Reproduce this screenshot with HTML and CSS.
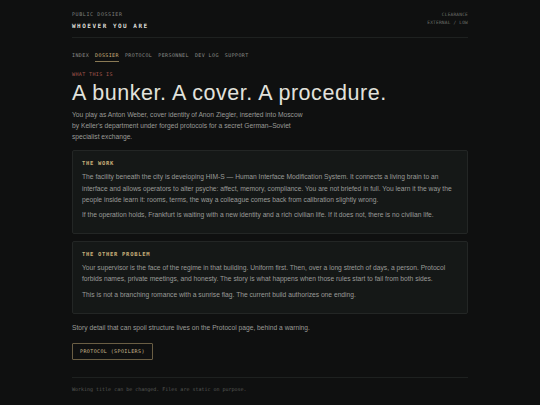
FILE: index.html
```html
<!DOCTYPE html>
<html lang="en">
<head>
    <meta charset="UTF-8">
    <meta name="viewport" content="width=device-width, initial-scale=1.0">
    <title>Dossier</title>
    <link rel="stylesheet" href="styles.css">
</head>
<body>
    <div class="container">
        <header class="top">
            <div>
                <div class="kicker">PUBLIC DOSSIER</div>
                <div class="site-title">WHOEVER YOU ARE</div>
            </div>
            <div class="clearance">
                <div>CLEARANCE</div>
                <div>EXTERNAL / LOW</div>
            </div>
        </header>

        <nav class="nav">
            <a href="#">INDEX</a>
            <a href="#" class="active">DOSSIER</a>
            <a href="#">PROTOCOL</a>
            <a href="#">PERSONNEL</a>
            <a href="#">DEV LOG</a>
            <a href="#">SUPPORT</a>
        </nav>

        <div class="eyebrow">WHAT THIS IS</div>
        <h1>A bunker. A cover. A procedure.</h1>
        <p class="lead">You play as Anton Weber, cover identity of Anon Ziegler, inserted into Moscow by Keller's department under forged protocols for a secret German–Soviet specialist exchange.</p>

        <section class="card">
            <h3>THE WORK</h3>
            <p>The facility beneath the city is developing HIM-S — Human Interface Modification System. It connects a living brain to an interface and allows operators to alter psyche: affect, memory, compliance. You are not briefed in full. You learn it the way the people inside learn it: rooms, terms, the way a colleague comes back from calibration slightly wrong.</p>
            <p>If the operation holds, Frankfurt is waiting with a new identity and a rich civilian life. If it does not, there is no civilian life.</p>
        </section>

        <section class="card">
            <h3>THE OTHER PROBLEM</h3>
            <p>Your supervisor is the face of the regime in that building. Uniform first. Then, over a long stretch of days, a person. Protocol forbids names, private meetings, and honesty. The story is what happens when those rules start to fail from both sides.</p>
            <p>This is not a branching romance with a sunrise flag. The current build authorizes one ending.</p>
        </section>

        <p class="note">Story detail that can spoil structure lives on the Protocol page, behind a warning.</p>

        <a href="#" class="btn">PROTOCOL (SPOILERS)</a>

        <footer class="footer">Working title can be changed. Files are static on purpose.</footer>
    </div>
</body>
</html>
```

FILE: styles.css
```css
body, html {
    margin: 0;
    padding: 0;
    background: #0f1010;
    color: #9a9b97;
    font-family: "Liberation Sans", Arial, sans-serif;
}

.container {
    max-width: 396px;
    margin: 0 auto;
    padding-top: 11px;
}

.top {
    display: flex;
    justify-content: space-between;
    padding-bottom: 7px;
    border-bottom: 1px solid #1e2120;
}

.kicker {
    font-family: "DejaVu Sans Mono", monospace;
    font-size: 5px;
    line-height: 7px;
    letter-spacing: 0.6px;
    color: #7d7f7b;
}

.site-title {
    margin-top: 4px;
    font-family: "DejaVu Sans Mono", monospace;
    font-weight: bold;
    font-size: 6px;
    line-height: 8px;
    letter-spacing: 1.5px;
    color: #dcdcd6;
}

.clearance {
    text-align: right;
    font-family: "DejaVu Sans Mono", monospace;
    font-size: 4.5px;
    line-height: 7.5px;
    letter-spacing: 0.2px;
    color: #6e706c;
}

.nav {
    display: flex;
    gap: 6px;
    margin-top: 14px;
}

.nav a {
    font-family: "DejaVu Sans Mono", monospace;
    font-size: 5px;
    line-height: 7px;
    letter-spacing: 0.4px;
    color: #8a8c88;
    text-decoration: none;
    padding-bottom: 2px;
    border-bottom: 1px solid transparent;
}

.nav a.active {
    color: #c9b27c;
    border-bottom-color: #8a7a55;
}

.eyebrow {
    margin-top: 9px;
    font-family: "DejaVu Sans Mono", monospace;
    font-size: 5px;
    line-height: 7px;
    letter-spacing: 0.4px;
    color: #a4564c;
}

h1 {
    margin: 3px 0 0;
    font-size: 21.5px;
    line-height: 24px;
    font-weight: normal;
    letter-spacing: 0.55px;
    color: #e2e2dc;
}

.lead {
    max-width: 238px;
    margin: 3.5px 0 0;
    font-size: 6.7px;
    line-height: 11.3px;
}

.card {
    margin-top: 8px;
    padding: 8.5px 9px 13px;
    background: #151817;
    border: 1px solid #232625;
    border-radius: 2px;
}

.card + .card {
    margin-top: 7px;
}

.card h3 {
    margin: 0 0 4.5px;
    font-family: "DejaVu Sans Mono", monospace;
    font-weight: bold;
    font-size: 5.5px;
    line-height: 7px;
    letter-spacing: 0.7px;
    color: #c7ae78;
}

.card p {
    margin: 0;
    font-size: 6.7px;
    line-height: 11.2px;
}

.card p + p {
    margin-top: 4px;
}

.note {
    margin: 8.5px 0 0;
    font-size: 6.7px;
    line-height: 11.3px;
}

.btn {
    display: inline-block;
    margin-top: 9px;
    padding: 0 7px;
    height: 15px;
    line-height: 15px;
    border: 1px solid #6a5e44;
    border-radius: 1px;
    font-family: "DejaVu Sans Mono", monospace;
    font-size: 5px;
    letter-spacing: 0.4px;
    color: #c9b98f;
    text-decoration: none;
}

.footer {
    margin-top: 17px;
    padding-top: 8px;
    border-top: 1px solid #1e2120;
    font-family: "DejaVu Sans Mono", monospace;
    font-size: 5px;
    line-height: 7px;
    color: #575955;
}
```
